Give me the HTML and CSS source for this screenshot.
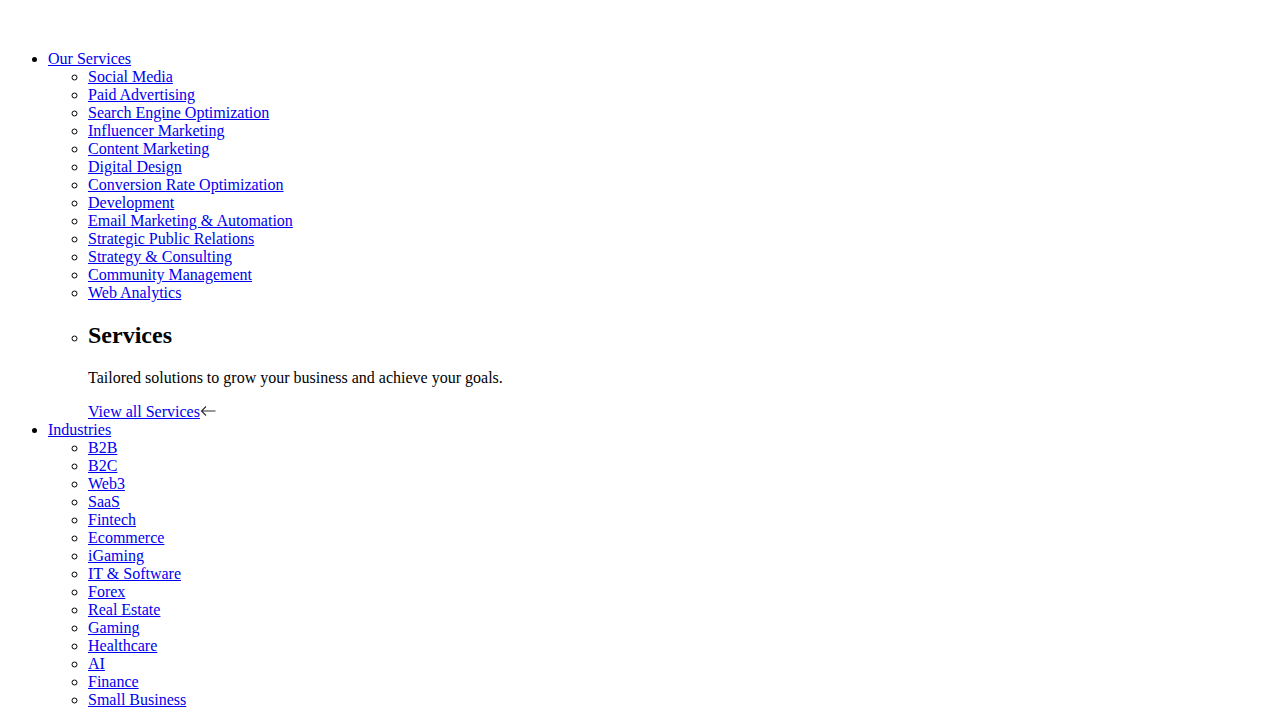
FILE: index.html
```html
<!DOCTYPE html>
<html lang="en">
<head>
    <meta charset="UTF-8">
    <meta name="viewport" content="width=device-width, initial-scale=1.0">
    <title>Services</title>
    <link rel="stylesheet" href="styles.css">
</head>
<body>
    <!-- header logo slot -->
    <div class="logo-slot"></div>

    <ul class="menu">
        <li>
            <a href="#">Our Services</a>
            <ul class="submenu">
                <li><a href="#">Social Media</a></li>
                <li><a href="#">Paid Advertising</a></li>
                <li><a href="#">Search Engine Optimization</a></li>
                <li><a href="#">Influencer Marketing</a></li>
                <li><a href="#">Content Marketing</a></li>
                <li><a href="#">Digital Design</a></li>
                <li><a href="#">Conversion Rate Optimization</a></li>
                <li><a href="#">Development</a></li>
                <li><a href="#">Email Marketing &amp; Automation</a></li>
                <li><a href="#">Strategic Public Relations</a></li>
                <li><a href="#">Strategy &amp; Consulting</a></li>
                <li><a href="#">Community Management</a></li>
                <li><a href="#">Web Analytics</a></li>
                <li>
                    <h2>Services</h2>
                    <p>Tailored solutions to grow your business and achieve your goals.</p>
                    <a href="#">View all Services</a><svg class="arrow" width="16" height="16" viewBox="0 0 16 16" fill="none" stroke="#333" stroke-width="1.2"><path d="M15.5 8H1.5M6 3.5L1.5 8L6 12.5"/></svg>
                </li>
            </ul>
        </li>
        <li>
            <a href="#">Industries</a>
            <ul class="submenu">
                <li><a href="#">B2B</a></li>
                <li><a href="#">B2C</a></li>
                <li><a href="#">Web3</a></li>
                <li><a href="#">SaaS</a></li>
                <li><a href="#">Fintech</a></li>
                <li><a href="#">Ecommerce</a></li>
                <li><a href="#">iGaming</a></li>
                <li><a href="#">IT &amp; Software</a></li>
                <li><a href="#">Forex</a></li>
                <li><a href="#">Real Estate</a></li>
                <li><a href="#">Gaming</a></li>
                <li><a href="#">Healthcare</a></li>
                <li><a href="#">AI</a></li>
                <li><a href="#">Finance</a></li>
                <li><a href="#">Small Business</a></li>
            </ul>
        </li>
    </ul>
</body>
</html>
```

FILE: styles.css
```css
/* plain document look */
body {
    font-family: 'Liberation Serif', 'Times New Roman', serif;
}

.logo-slot {
    height: 26px;
}

.arrow {
    vertical-align: -2px;
}
```
